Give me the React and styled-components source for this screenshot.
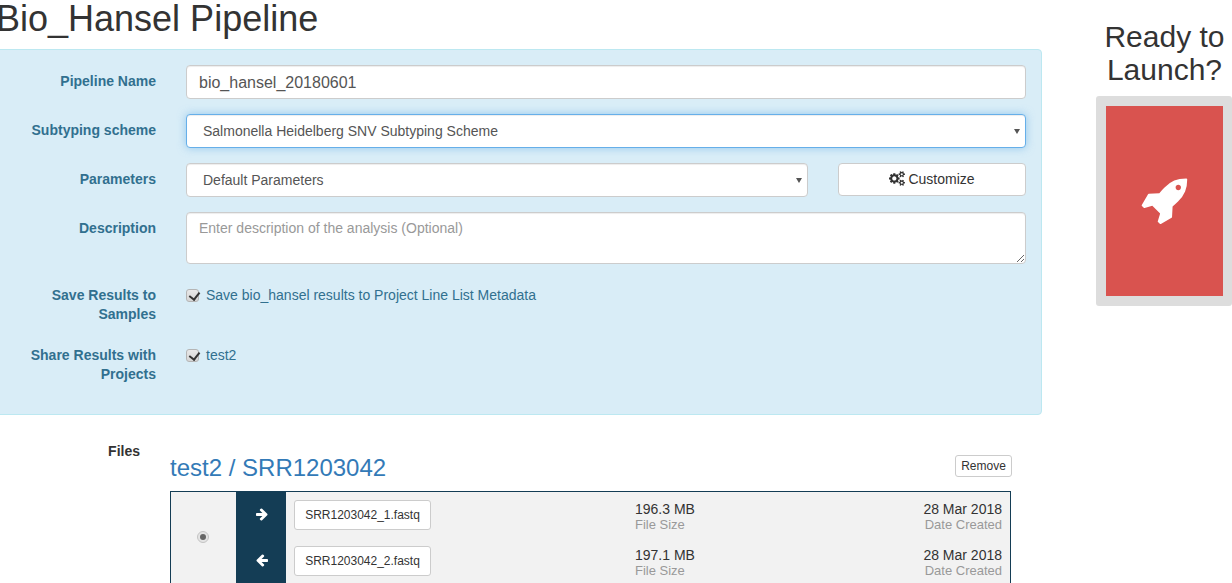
import React from 'react';
import styled, { createGlobalStyle, css } from 'styled-components';

const GlobalStyle = createGlobalStyle`
	* {
		box-sizing: border-box;
	}

	html,
	body {
		margin: 0;
		height: 100%;
		overflow: hidden;
		background: #fff;
	}

	body {
		font-family: 'Liberation Sans', Arial, sans-serif;
		font-size: 14px;
		line-height: 20px;
		color: #333;
	}
`;

const Page = styled.div`
	display: flex;
	align-items: flex-start;
	height: 583px;
	overflow: hidden;
`;

const Main = styled.main`
	flex: none;
	width: 1046px;
	margin-left: -4px;
`;

const Title = styled.h1`
	margin: -1px 0 10px;
	font-size: 36px;
	font-weight: 400;
	line-height: 40px;
	color: #333;
`;

const Panel = styled.section`
	padding: 15px 15px 30px 0;
	background: #d9edf7;
	border: 1px solid #bce8f1;
	border-radius: 4px;
`;

const FormRow = styled.div`
	display: grid;
	grid-template-columns: 159px 1fr;
	column-gap: 30px;
	margin-bottom: 15px;

	&:last-child {
		margin-bottom: 0;
	}
`;

const Label = styled.label`
	padding-top: 7px;
	font-weight: 700;
	line-height: 19px;
	text-align: right;
	color: #31708f;
`;

const fieldStyle = css`
	display: block;
	width: 100%;
	background: #fff;
	border: 1px solid #ccc;
	border-radius: 4px;
	box-shadow: inset 0 1px 1px rgba(0, 0, 0, 0.075);
	font-family: inherit;
	color: #555;
	outline: none;
`;

const TextInput = styled.input`
	${fieldStyle}
	height: 34px;
	padding: 7px 12px 5px;
	font-size: 16px;
`;

const TextArea = styled.textarea`
	${fieldStyle}
	height: 52px;
	padding: 5px 12px;
	font-size: 14px;
	line-height: 20px;

	&::placeholder {
		color: #999;
	}
`;

const SelectWrap = styled.div`
	position: relative;
	flex: 1;

	&::after {
		content: '';
		position: absolute;
		right: 6px;
		top: 15px;
		border-left: 3px solid transparent;
		border-right: 3px solid transparent;
		border-top: 5px solid #555;
		pointer-events: none;
	}
`;

const Select = styled.select`
	${fieldStyle}
	height: 34px;
	padding: 6px 12px 6px 16px;
	font-size: 14px;
	appearance: none;

	${(p) =>
		p.$focused &&
		css`
			border-color: #66afe9;
			box-shadow:
				inset 0 1px 1px rgba(0, 0, 0, 0.075),
				0 0 8px rgba(102, 175, 233, 0.6);
		`}
`;

const ParamRow = styled.div`
	display: flex;
	align-items: flex-start;
	gap: 30px;
`;

const Button = styled.button`
	display: inline-flex;
	align-items: center;
	justify-content: center;
	gap: 2px;
	flex: none;
	background: #fff;
	border: 1px solid #ccc;
	font-family: inherit;
	color: #333;
	${(p) =>
		p.$small
			? css`
					width: 57px;
					height: 22px;
					margin-top: 14px;
					padding: 0;
					border-radius: 3px;
					font-size: 12px;
				`
			: css`
					width: 188px;
					height: 33px;
					padding: 0 0 2px;
					border-radius: 4px;
					font-size: 14px;
				`}
`;

const CheckLine = styled.label`
	display: flex;
	align-items: flex-start;
	gap: 7px;
	padding-top: 6px;
	line-height: 20px;
	color: #31708f;
`;

const CheckBox = styled.input.attrs({ type: 'checkbox' })`
	position: relative;
	flex: none;
	width: 13px;
	height: 13px;
	margin: 4px 0 0;
	appearance: none;
	background: linear-gradient(#e8e8e8, #d6d6d6);
	border: 1px solid #b5b5b5;
	border-radius: 3px;

	&::after {
		content: '';
		position: absolute;
		left: 3.5px;
		top: 0;
		width: 5px;
		height: 8px;
		border-right: 2.5px solid #333;
		border-bottom: 2.5px solid #333;
		transform: rotate(38deg);
	}
`;

const FilesRow = styled.section`
	display: grid;
	grid-template-columns: 144px 1fr;
	column-gap: 30px;
	padding: 26px 30px 0 0;
`;

const FilesLabel = styled.div`
	font-weight: 700;
	text-align: right;
	color: #333;
`;

const SampleHeader = styled.div`
	display: flex;
	align-items: flex-start;
	justify-content: space-between;
	height: 50px;
`;

const SampleName = styled.a`
	margin-top: 14px;
	font-size: 24px;
	line-height: 26px;
	color: #337ab7;
	text-decoration: none;
`;

const SampleBox = styled.div`
	display: grid;
	grid-template-columns: 65px 50px 1fr;
	width: 841px;
	background: #f2f2f2;
	border: 1px solid #143d55;
`;

const RadioCell = styled.div`
	display: flex;
	align-items: center;
	justify-content: center;
	padding: 0 2px 2px 0;
`;

const Radio = styled.input.attrs({ type: 'radio' })`
	position: relative;
	width: 12px;
	height: 12px;
	margin: 0;
	appearance: none;
	background: #e4e4e4;
	border: 1px solid #c4c4c4;
	border-radius: 50%;

	&::after {
		content: '';
		position: absolute;
		left: 2px;
		top: 2px;
		width: 6px;
		height: 6px;
		border-radius: 50%;
		background: #666;
	}
`;

const Directions = styled.div`
	display: flex;
	flex-direction: column;
	background: #143d55;
`;

const DirectionIcon = styled.div`
	display: flex;
	align-items: flex-start;
	justify-content: center;
	height: 46px;
	padding: 15px 0 0 1px;
	color: #fff;
`;

const Files = styled.div`
	display: flex;
	flex-direction: column;
`;

const FileRow = styled.div`
	display: grid;
	grid-template-columns: 137px 1fr 1fr;
	align-items: start;
	height: 46px;
	padding: 8px 8px 0;
`;

const FileButton = styled.button`
	height: 30px;
	padding: 0;
	background: #fff;
	border: 1px solid #ccc;
	border-radius: 3px;
	font-family: inherit;
	font-size: 12px;
	color: #333;
`;

const Stat = styled.div`
	display: flex;
	flex-direction: column;
	margin-top: 1px;
	line-height: 16px;
	text-align: ${(p) => (p.$right ? 'right' : 'left')};
	padding-left: ${(p) => (p.$right ? '0' : '204px')};
`;

const StatValue = styled.span`
	font-size: 14px;
	color: #333;
`;

const StatName = styled.span`
	font-size: 13px;
	color: #999;
`;

const Aside = styled.aside`
	flex: none;
	width: 136px;
	margin-left: 54px;
	padding: 20px 0 0;
`;

const AsideTitle = styled.h2`
	margin: 0 -0.5px 10px 0.5px;
	font-size: 30px;
	font-weight: 400;
	line-height: 33px;
	text-align: center;
	color: #333;
`;

const LaunchFrame = styled.div`
	padding: 10px 9px 10px 10px;
	background: #ddd;
	border-radius: 3px;
`;

const LaunchButton = styled.button`
	display: flex;
	align-items: center;
	justify-content: center;
	width: 100%;
	height: 190px;
	padding: 0 1px 2px 0;
	background: #d9534f;
	border: none;
	color: #fff;
`;

const Icon = ({ d, size, box = 1792 }) => (
	<svg
		width={size}
		height={(size * 1792) / box}
		viewBox={`0 0 ${box} 1792`}
		fill='currentColor'
		aria-hidden='true'
	>
		<path d={d} />
	</svg>
);

const ROCKET =
	'M1504 448q0-40-28-68t-68-28-68 28-28 68 28 68 68 28 68-28 28-68zm224-288q0 249-75.5 430.5t-253.5 360.5q-81 80-195 176l-20 379q-2 16-16 26l-384 224q-7 4-16 4-12 0-23-9l-64-64q-13-14-8-32l85-276-281-281-276 85q-3 1-9 1-14 0-23-9l-64-64q-17-19-5-39l224-384q10-14 26-16l379-20q96-114 176-195 188-187 358-258t431-71q14 0 24 9.5t10 22.5z';
const COGS =
	'M896 896q0-106-75-181t-181-75-181 75-75 181 75 181 181 75 181-75 75-181zm768 512q0-52-38-90t-90-38-90 38-38 90q0 53 37.5 90.5t90.5 37.5 90.5-37.5 37.5-90.5zm0-1024q0-52-38-90t-90-38-90 38-38 90q0 53 37.5 90.5t90.5 37.5 90.5-37.5 37.5-90.5zm-384 421v185q0 10-7 19.5t-16 10.5l-155 24q-11 35-32 76 34 48 90 115 7 11 7 20 0 12-7 19-23 30-82.5 89.5t-78.5 59.5q-11 0-21-7l-115-90q-37 19-77 31-11 108-23 155-7 24-30 24h-186q-11 0-20-7.5t-10-17.5l-23-153q-34-10-75-31l-118 89q-7 7-20 7-11 0-21-8-144-133-144-160 0-9 7-19 10-14 41-53t47-61q-23-44-35-82l-152-24q-10-1-17-9.5t-7-19.5v-185q0-10 7-19.5t16-10.5l155-24q11-35 32-76-34-48-90-115-7-11-7-20 0-12 7-20 22-30 82-89t79-59q11 0 21 7l115 90q34-18 77-32 11-108 23-154 7-24 30-24h186q11 0 20 7.5t10 17.5l23 153q34 10 75 31l118-89q8-7 20-7 11 0 21 8 144 133 144 160 0 8-7 19-12 16-42 54t-45 60q23 48 34 82l152 23q10 2 17 10.5t7 19.5zm640 533v140q0 16-149 31-12 27-30 52 51 113 51 138 0 4-4 7-122 71-124 71-8 0-46-47t-52-68q-20 2-30 2t-30-2q-14 21-52 68t-46 47q-2 0-124-71-4-3-4-7 0-25 51-138-18-25-30-52-149-15-149-31v-140q0-16 149-31 13-29 30-52-51-113-51-138 0-4 4-7 4-2 35-20t59-34 30-16q8 0 46 46.5t52 67.5q20-2 30-2t30 2q51-71 92-112l6-2q4 0 124 70 4 3 4 7 0 25-51 138 17 23 30 52 149 15 149 31zm0-1024v140q0 16-149 31-12 27-30 52 51 113 51 138 0 4-4 7-122 71-124 71-8 0-46-47t-52-68q-20 2-30 2t-30-2q-14 21-52 68t-46 47q-2 0-124-71-4-3-4-7 0-25 51-138-18-25-30-52-149-15-149-31v-140q0-16 149-31 13-29 30-52-51-113-51-138 0-4 4-7 4-2 35-20t59-34 30-16q8 0 46 46.5t52 67.5q20-2 30-2t30 2q51-71 92-112l6-2q4 0 124 70 4 3 4 7 0 25-51 138 17 23 30 52 149 15 149 31z';
const ARROW_RIGHT =
	'M1600 960q0 54-37 91l-651 651q-39 37-91 37-51 0-90-37l-75-75q-38-38-38-91t38-91l293-293h-704q-52 0-84.5-37.5t-32.5-90.5v-128q0-53 32.5-90.5t84.5-37.5h704l-293-294q-38-36-38-90t38-90l75-75q38-38 90-38 53 0 91 38l651 651q37 35 37 90z';
const ARROW_LEFT =
	'M1664 896v128q0 53-32.5 90.5t-84.5 37.5h-704l293 294q38 36 38 90t-38 90l-75 75q-38 38-90 38-53 0-91-38l-651-651q-37-35-37-90 0-54 37-91l651-651q38-38 91-38 52 0 90 38l75 74q38 38 38 91t-38 91l-293 293h704q52 0 84.5 37.5t32.5 90.5z';

const FILES = [
	{ name: 'SRR1203042_1.fastq', size: '196.3 MB', date: '28 Mar 2018', arrow: ARROW_RIGHT },
	{ name: 'SRR1203042_2.fastq', size: '197.1 MB', date: '28 Mar 2018', arrow: ARROW_LEFT },
];

const App = () => {
	return (
		<Page>
			<GlobalStyle />
			<Main>
				<Title>Bio_Hansel Pipeline</Title>
				<Panel>
					<FormRow>
						<Label>Pipeline Name</Label>
						<TextInput defaultValue='bio_hansel_20180601' />
					</FormRow>
					<FormRow>
						<Label>Subtyping scheme</Label>
						<SelectWrap>
							<Select $focused>
								<option>Salmonella Heidelberg SNV Subtyping Scheme</option>
							</Select>
						</SelectWrap>
					</FormRow>
					<FormRow>
						<Label>Parameters</Label>
						<ParamRow>
							<SelectWrap>
								<Select>
									<option>Default Parameters</option>
								</Select>
							</SelectWrap>
							<Button>
								<Icon d={COGS} size={17} box={2048} />
								Customize
							</Button>
						</ParamRow>
					</FormRow>
					<FormRow>
						<Label>Description</Label>
						<TextArea placeholder='Enter description of the analysis (Optional)' />
					</FormRow>
					<FormRow>
						<Label>Save Results to Samples</Label>
						<CheckLine>
							<CheckBox defaultChecked />
							Save bio_hansel results to Project Line List Metadata
						</CheckLine>
					</FormRow>
					<FormRow>
						<Label>Share Results with Projects</Label>
						<CheckLine>
							<CheckBox defaultChecked />
							test2
						</CheckLine>
					</FormRow>
				</Panel>
				<FilesRow>
					<FilesLabel>Files</FilesLabel>
					<div>
						<SampleHeader>
							<SampleName>test2 / SRR1203042</SampleName>
							<Button $small>Remove</Button>
						</SampleHeader>
						<SampleBox>
							<RadioCell>
								<Radio defaultChecked />
							</RadioCell>
							<Directions>
								{FILES.map((f) => (
									<DirectionIcon key={f.name}>
										<Icon d={f.arrow} size={14} />
									</DirectionIcon>
								))}
							</Directions>
							<Files>
								{FILES.map((f) => (
									<FileRow key={f.name}>
										<FileButton>{f.name}</FileButton>
										<Stat>
											<StatValue>{f.size}</StatValue>
											<StatName>File Size</StatName>
										</Stat>
										<Stat $right>
											<StatValue>{f.date}</StatValue>
											<StatName>Date Created</StatName>
										</Stat>
									</FileRow>
								))}
							</Files>
						</SampleBox>
					</div>
				</FilesRow>
			</Main>
			<Aside>
				<AsideTitle>Ready to Launch?</AsideTitle>
				<LaunchFrame>
					<LaunchButton>
						<Icon d={ROCKET} size={50} />
					</LaunchButton>
				</LaunchFrame>
			</Aside>
		</Page>
	);
};

export default App;
